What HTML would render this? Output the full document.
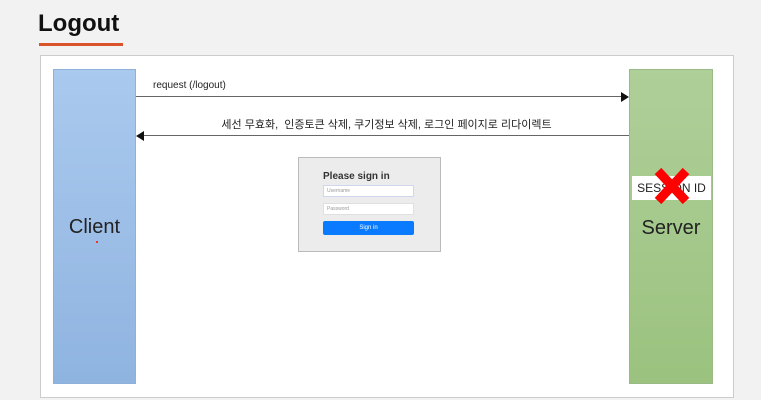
<!DOCTYPE html>
<html><head><meta charset="utf-8"><style>
body{margin:0;width:761px;height:400px;background:#f2f2f2;position:relative;overflow:hidden;font-family:"Liberation Sans","Noto Sans CJK KR",sans-serif}
.a{position:absolute}
</style></head><body>
<div class="a" style="left:38px;top:10px;font-size:24px;font-weight:bold;color:#111">Logout</div>
<div class="a" style="left:39px;top:43px;width:84px;height:3px;background:#d9542b"></div>
<div class="a" style="left:40px;top:55px;width:692px;height:341px;background:#fff;border:1px solid #ccc"></div>
<div class="a" style="left:53px;top:69px;width:83px;height:315px;background:linear-gradient(#aac9ee,#8fb4e0);border:1px solid #8fb0d8;box-sizing:border-box"></div>
<div class="a" style="left:53px;top:216px;width:83px;text-align:center;font-size:20px;color:#222">Client</div>
<div class="a" style="left:96px;top:241px;width:2px;height:2px;background:#e33"></div>
<div class="a" style="left:629px;top:69px;width:84px;height:315px;background:linear-gradient(#afcf99,#9bc27f);border:1px solid #9aba85;box-sizing:border-box"></div>
<div class="a" style="left:632px;top:176px;width:79px;height:24px;background:#fff"></div>
<div class="a" style="left:632px;top:181px;width:79px;text-align:center;font-size:12px;color:#222">SESSION ID</div>
<svg class="a" style="left:654px;top:167px" width="36" height="38"><path d="M4 4L32 34M32 4L4 34" stroke="#f00" stroke-width="9"/></svg>
<div class="a" style="left:629px;top:217px;width:84px;text-align:center;font-size:20px;color:#222">Server</div>
<div class="a" style="left:153px;top:80px;font-size:10px;color:#222">request (/logout)</div>
<div class="a" style="left:136px;top:96px;width:487px;height:1px;background:#666"></div>
<svg class="a" style="left:621px;top:92px" width="9" height="10"><path d="M0 0L8 5L0 10Z" fill="#111"/></svg>
<div class="a" style="left:140px;top:116px;width:493px;text-align:center;font-size:11px;color:#222">세선 무효화,&nbsp; 인증토큰 삭제, 쿠기정보 삭제, 로그인 페이지로 리다이렉트</div>
<div class="a" style="left:143px;top:135px;width:486px;height:1px;background:#666"></div>
<svg class="a" style="left:136px;top:131px" width="9" height="10"><path d="M8 0L0 5L8 10Z" fill="#111"/></svg>
<div class="a" style="left:298px;top:157px;width:143px;height:95px;background:#ececec;border:1px solid #bbb;box-sizing:border-box"></div>
<div class="a" style="left:323px;top:171px;font-size:10px;font-weight:bold;color:#333">Please sign in</div>
<div class="a" style="left:323px;top:185px;width:91px;height:12px;background:#fff;border:1px solid #cdd8ee;box-sizing:border-box;font-size:5px;color:#999;padding:2px 3px">Username</div>
<div class="a" style="left:323px;top:203px;width:91px;height:12px;background:#fff;border:1px solid #e0e0e0;box-sizing:border-box;font-size:5px;color:#999;padding:2px 3px">Password</div>
<div class="a" style="left:323px;top:221px;width:91px;height:14px;background:#0a7bff;border-radius:2px;color:#fff;font-size:6px;text-align:center;line-height:14px">Sign in</div>
</body></html>
